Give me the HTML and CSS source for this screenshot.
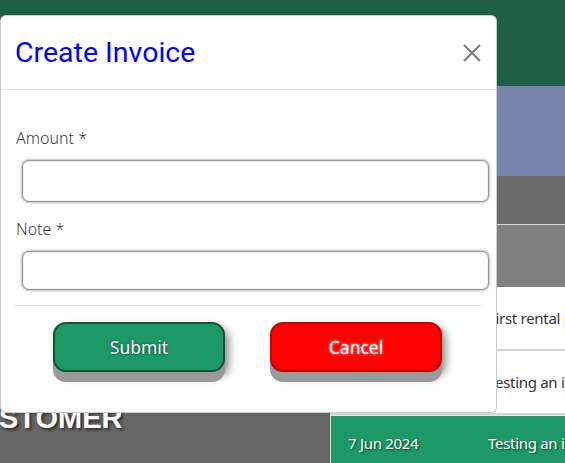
FILE: index.html
```html
<!DOCTYPE html>
<html lang="en">
<head>
<meta charset="utf-8">
<title>Create Invoice</title>
<link rel="stylesheet" href="styles.css">
</head>
<body>
<div class="page">
  <header class="topbar"></header>
  <div class="content">
    <div class="left-col">
      <div class="customer-band"><span class="customer-title">STOMER</span></div>
    </div>
    <div class="right-col">
      <div class="blk blk-blue"></div>
      <div class="blk blk-dark"></div>
      <div class="blk blk-mid"></div>
      <div class="row"><span class="date"></span><span class="desc">First rental payment</span></div>
      <div class="row"><span class="date"></span><span class="desc">Testing an invoice</span></div>
      <div class="row row-green"><span class="date">7 Jun 2024</span><span class="desc">Testing an invoice</span></div>
    </div>
  </div>
</div>

<div class="modal">
  <div class="modal-header">
    <h2 class="modal-title">Create Invoice</h2>
    <button class="close-btn" aria-label="Close">
      <svg width="18" height="18" viewBox="0 0 18 18"><path d="M1 1L17 17M17 1L1 17" stroke="#7a7a7a" stroke-width="2" fill="none"/></svg>
    </button>
  </div>
  <div class="modal-body">
    <div class="field field-amount">
      <label class="field-label">Amount *</label>
      <input class="field-input input-tall" type="text">
    </div>
    <div class="field field-note">
      <label class="field-label">Note *</label>
      <input class="field-input" type="text">
    </div>
  </div>
  <div class="modal-footer">
    <button class="btn btn-submit">Submit</button>
    <button class="btn btn-cancel">Cancel</button>
  </div>
</div>
</body>
</html>
```
FILE: styles.css
```css
* { box-sizing: border-box; }

body {
  margin: 0;
  width: 565px;
  height: 463px;
  overflow: hidden;
  position: relative;
  font-family: "Noto Sans", "Open Sans", sans-serif;
  background: #fff;
}

.page {
  display: flex;
  flex-direction: column;
  height: 463px;
}

.topbar {
  flex: none;
  height: 86px;
  background: #1e5e43;
}

.content {
  flex: 1;
  display: grid;
  grid-template-columns: 331px 1fr;
}

.left-col {
  display: flex;
  flex-direction: column;
  justify-content: flex-end;
  background: #fff;
  border-right: 1px solid #d8d8d8;
}

.customer-band {
  height: 70px;
  background: #666666;
  padding-top: 9px;
}

.customer-title {
  display: block;
  font-family: "Liberation Sans", Arial, sans-serif;
  font-weight: 700;
  font-size: 29px;
  line-height: 32px;
  color: #fff;
  text-indent: -1px;
  text-shadow: 2px 2px 3px rgba(0,0,0,0.55);
}

.right-col {
  display: flex;
  flex-direction: column;
}

.blk { flex: none; }
.blk-blue { height: 90px; background: #7884ab; }
.blk-dark { height: 49px; background: #6b6b6b; border-bottom: 1px solid #d9d9d9; }
.blk-mid { height: 62px; background: #808080; }

.row {
  flex: none;
  height: 64px;
  display: grid;
  grid-template-columns: 140px 1fr;
  align-items: center;
  padding-left: 17px;
  background: #fff;
  border-bottom: 2px solid #d4d4d4;
  color: #333;
  font-size: 15px;
  letter-spacing: -0.3px;
  white-space: nowrap;
  overflow: hidden;
}

.row-green {
  flex: 1;
  background: #1e9866;
  color: #fff;
  border-bottom: none;
  border-top: 1px solid #e8e8e8;
  text-shadow: 1px 1px 2px rgba(0,0,0,0.6);
  padding-top: 7px;
}

/* modal */
.modal {
  position: absolute;
  left: 0;
  top: 15px;
  width: 497px;
  height: 398px;
  background: #fff;
  border: 1px solid rgba(0,0,0,0.2);
  border-radius: 6px;
  display: flex;
  flex-direction: column;
}

.modal-header {
  flex: none;
  height: 74px;
  display: flex;
  align-items: center;
  justify-content: space-between;
  padding: 0 15px 0 14px;
  border-bottom: 1px solid #dee2e6;
}

.modal-title {
  margin: 0;
  font-family: Roboto, "Noto Sans", sans-serif;
  font-weight: 400;
  font-size: 28.5px;
  line-height: 32px;
  color: #0000ff;
}

.close-btn {
  border: none;
  background: none;
  padding: 0;
  width: 18px;
  height: 18px;
  display: flex;
}

.modal-body {
  flex: none;
  padding: 36px 7px 15px 15px;
  display: flex;
  flex-direction: column;
  gap: 15px;
}

.field-label {
  display: block;
  font-size: 16px;
  line-height: 24px;
  font-weight: 300;
  color: #3a3a3a;
  margin-left: 0;
}

.field-input {
  display: block;
  width: calc(100% - 6px);
  margin: 10px 0 0 6px;
  height: 39px;
  border: 1px solid #9a9a9a;
  border-radius: 7px;
  box-shadow: 0 0 2px 1px rgba(0,0,0,0.25), inset 0 0 2px rgba(0,0,0,0.2);
  background: #fff;
  outline: none;
}

.input-tall { height: 42px; }

.modal-footer {
  flex: none;
  margin: 0 15px 0 13px;
  border-top: 1px solid #dee2e6;
  padding-top: 16px;
  display: flex;
  justify-content: center;
  gap: 45px;
}

.btn {
  width: 172px;
  height: 50px;
  border-radius: 13px;
  font-family: "Noto Sans", "Open Sans", sans-serif;
  font-size: 17.5px;
  color: #fff;
  cursor: pointer;
  box-shadow: 0 10px 0 #999999, 4px 5px 8px rgba(0,0,0,0.45);
}

.btn-submit {
  background: #1e9866;
  border: 2px solid #0c5434;
  text-shadow: 0 0 3px rgba(0,0,0,0.6);
}

.btn-cancel {
  background: #ff0000;
  border: 2px solid #c20000;
  text-shadow: 0 0 3px rgba(255,255,255,0.8);
}
```
